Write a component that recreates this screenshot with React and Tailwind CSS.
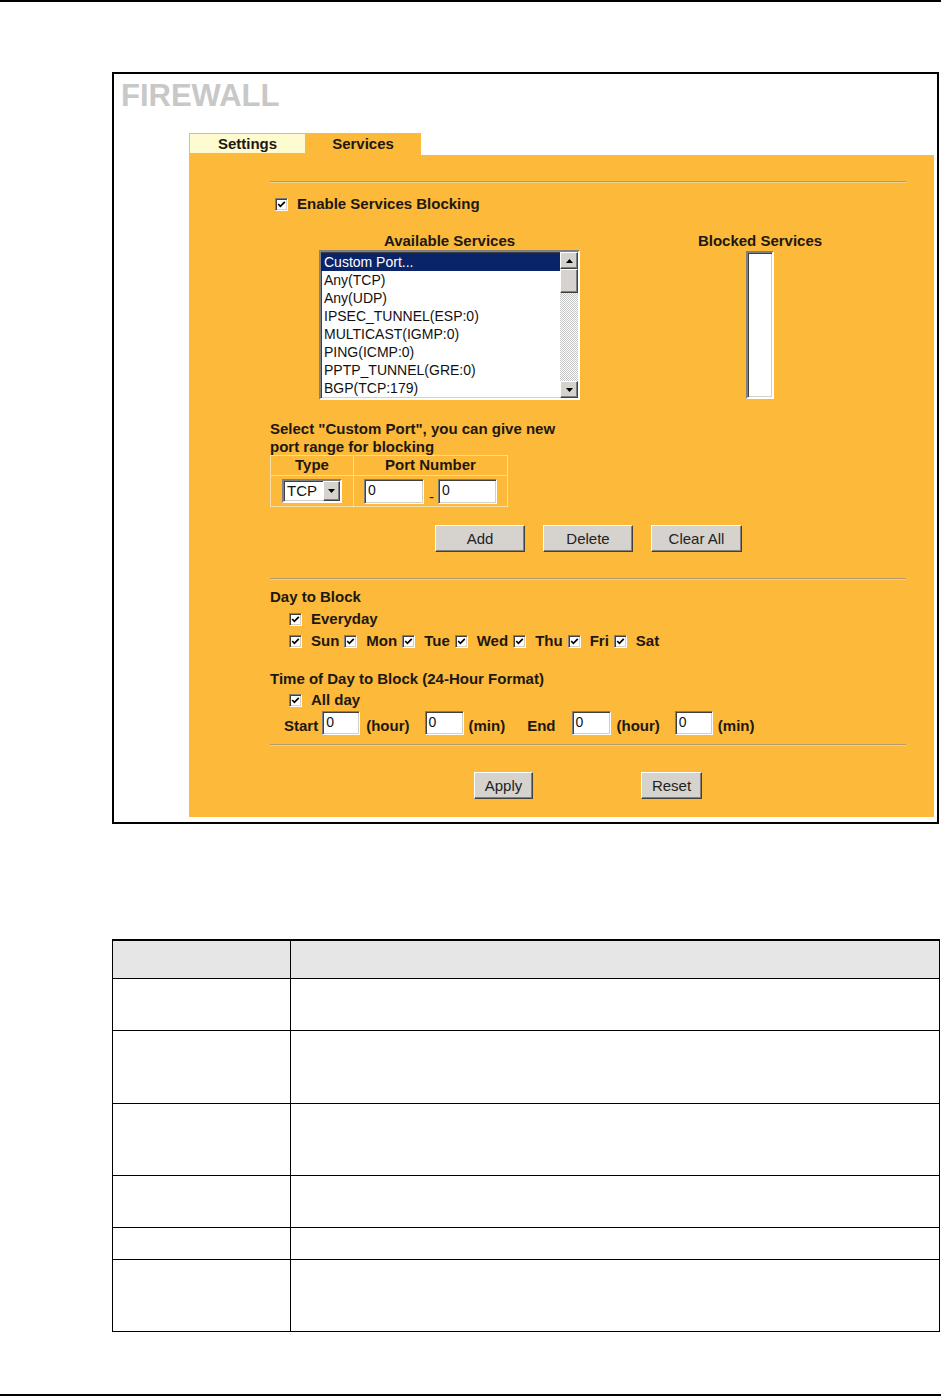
import React from "react"

const insetBox =
  "bg-white border border-t-[#808080] border-l-[#808080] border-r-white border-b-white shadow-[inset_1px_1px_0_#404040,inset_-1px_-1px_0_#d4d0c8]"
const raisedBox =
  "bg-[#d6d3ce] border border-t-white border-l-white border-r-[#404040] border-b-[#404040] shadow-[inset_-1px_-1px_0_#808080]"

const Check = () => (
  <span className={`inline-flex w-[13px] h-[13px] shrink-0 items-center justify-center ${insetBox}`}>
    <svg width="9" height="9" viewBox="0 0 9 9">
      <path d="M1.2 4 L3.4 6.3 L7.8 1.8" fill="none" stroke="#000" strokeWidth="1.7" />
    </svg>
  </span>
)

const Btn = ({ children, className }) => (
  <div
    className={`flex items-center justify-center text-[15px] text-[#222] ${raisedBox} ${className}`}
  >
    {children}
  </div>
)

const Field = ({ className, value = "0" }) => (
  <div className={`${insetBox} ${className} pl-[3px] pt-[2px] text-[14px] leading-[16px] text-[#111]`}>
    {value}
  </div>
)

const Arrow = ({ up }) => (
  <svg width="7" height="4" viewBox="0 0 7 4">
    <path d={up ? "M0 4 L3.5 0 L7 4 Z" : "M0 0 L3.5 4 L7 0 Z"} fill="#000" />
  </svg>
)

const Line = ({ className }) => (
  <div className={`w-[636px] border-t border-t-[#b39a70] border-b border-b-[#ecd08e] ${className}`} />
)

const services = [
  "Custom Port...",
  "Any(TCP)",
  "Any(UDP)",
  "IPSEC_TUNNEL(ESP:0)",
  "MULTICAST(IGMP:0)",
  "PING(ICMP:0)",
  "PPTP_TUNNEL(GRE:0)",
  "BGP(TCP:179)",
]

const days = ["Sun", "Mon", "Tue", "Wed", "Thu", "Fri", "Sat"]

const rowHeights = ["h-[52px]", "h-[73px]", "h-[72px]", "h-[52px]", "h-[32px]", "h-[72px]"]

const Label = ({ children, className = "" }) => (
  <span className={`font-bold text-[15px] leading-[18px] text-[#1c1812] ${className}`}>{children}</span>
)

export default function App() {
  return (
    <div className="w-[941px] h-[1396px] bg-white font-['Liberation_Sans',Arial,sans-serif] leading-[18px] overflow-hidden">
      <div className="h-[2px] bg-black" />

      {/* screenshot frame */}
      <div className="mt-[70px] ml-[112px] w-[827px] h-[752px] border-2 border-black bg-white pt-[6px]">
        <div className="ml-[7px] h-[31px] text-[31px] leading-[31px] font-bold text-[#c8c8c8]">FIREWALL</div>

        <div className="mt-[22px] ml-[75px] w-[232px] h-[22px] bg-[#fdb93a] flex items-start pl-[1px] pt-[1px]">
          <div className="w-[115px] h-[19px] bg-[#fffbd0] text-center leading-[19px]">
            <Label className="leading-[19px]">Settings</Label>
          </div>
          <div className="flex-1 text-center leading-[19px]">
            <Label className="leading-[19px]">Services</Label>
          </div>
        </div>

        <div className="ml-[75px] mr-[3px] h-[662px] bg-[#fdb93a] pl-[81px] pt-[26px]">
          <Line />

          <div className="mt-[12px] h-[18px] flex items-center">
            <span className="ml-[5px] flex">
              <Check />
            </span>
            <Label className="ml-[9px]">Enable Services Blocking</Label>
          </div>

          <div className="mt-[19px] flex items-start">
            <div className="ml-[49px] w-[261px] flex flex-col items-center">
              <Label className="h-[18px]">Available Services</Label>
              <div className={`w-[261px] h-[150px] border-2 ${insetBox} flex`}>
                <div className="flex-1 pt-[1px]">
                  {services.map((s, i) => (
                    <div
                      key={s}
                      className={`h-[18px] pl-[3px] text-[14px] leading-[18px] ${
                        i === 0 ? "bg-[#0a246a] text-white" : "text-[#111]"
                      }`}
                    >
                      {s}
                    </div>
                  ))}
                </div>
                <div className="w-[18px] flex flex-col">
                  <div className={`h-[17px] flex items-center justify-center ${raisedBox}`}>
                    <Arrow up />
                  </div>
                  <div className={`h-[24px] ${raisedBox}`} />
                  <div className="flex-1 bg-[repeating-conic-gradient(#c4c4c4_0_25%,#ffffff_0_50%)] bg-size-[2px_2px]" />
                  <div className={`h-[17px] flex items-center justify-center ${raisedBox}`}>
                    <Arrow />
                  </div>
                </div>
              </div>
            </div>

            <div className="ml-[110px] w-[140px] flex flex-col items-center">
              <Label className="h-[18px]">Blocked Services</Label>
              <div className={`mt-[1px] w-[28px] h-[148px] border-2 ${insetBox}`} />
            </div>
          </div>

          <div className="mt-[20px] h-[35px] font-bold text-[15px] leading-[18px] text-[#1c1812]">
            Select "Custom Port", you can give new
            <br />
            port range for blocking
          </div>

          <div className="w-[238px] h-[52px] border border-[#f3dea6] flex flex-col">
            <div className="h-[20px] flex border-b border-[#f3dea6]">
              <div className="w-[83px] border-r border-[#f3dea6] text-center">
                <Label>Type</Label>
              </div>
              <div className="flex-1 text-center">
                <Label>Port Number</Label>
              </div>
            </div>
            <div className="flex-1 flex">
              <div className="w-[83px] border-r border-[#f3dea6] flex items-center justify-center">
                <div className={`w-[60px] h-[24px] border-2 ${insetBox} flex`}>
                  <div className="flex-1 pl-[3px] text-[15px] leading-[19px] text-[#111]">TCP</div>
                  <div className={`w-[17px] flex items-center justify-center ${raisedBox}`}>
                    <Arrow />
                  </div>
                </div>
              </div>
              <div className="flex-1 flex items-center justify-center">
                <div className="flex items-end">
                  <Field className="w-[60px] h-[25px]" />
                  <span className="ml-[5px] mr-[4px] text-[15px] leading-[15px] text-[#222]">-</span>
                  <Field className="w-[59px] h-[25px]" />
                </div>
              </div>
            </div>
          </div>

          <div className="mt-[18px] flex">
            <Btn className="ml-[165px] w-[90px] h-[27px]">Add</Btn>
            <Btn className="ml-[18px] w-[90px] h-[27px]">Delete</Btn>
            <Btn className="ml-[18px] w-[91px] h-[27px]">Clear All</Btn>
          </div>

          <Line className="mt-[26px]" />

          <div className="mt-[8px] h-[18px]">
            <Label>Day to Block</Label>
          </div>
          <div className="mt-[4px] h-[18px] flex items-center pl-[19px]">
            <Check />
            <Label className="ml-[9px]">Everyday</Label>
          </div>
          <div className="mt-[4px] h-[18px] flex items-center pl-[19px]">
            {days.map((d) => (
              <React.Fragment key={d}>
                <Check />
                <Label className="ml-[9px] mr-[5px]">{d}</Label>
              </React.Fragment>
            ))}
          </div>

          <div className="mt-[20px] h-[18px]">
            <Label>Time of Day to Block (24-Hour Format)</Label>
          </div>
          <div className="mt-[3px] h-[18px] flex items-center pl-[19px]">
            <Check />
            <Label className="ml-[9px]">All day</Label>
          </div>
          <div className="mt-[2px] h-[24px] flex items-end">
            <Label className="ml-[14px]">Start</Label>
            <Field className="ml-[4px] w-[38px] h-[24px]" />
            <Label className="ml-[6px]">(hour)</Label>
            <Field className="ml-[15px] w-[39px] h-[24px]" />
            <Label className="ml-[5px]">(min)</Label>
            <Label className="ml-[22px]">End</Label>
            <Field className="ml-[16px] w-[39px] h-[24px]" />
            <Label className="ml-[6px]">(hour)</Label>
            <Field className="ml-[15px] w-[38px] h-[24px]" />
            <Label className="ml-[5px]">(min)</Label>
          </div>

          <Line className="mt-[9px]" />

          <div className="mt-[26px] flex">
            <Btn className="ml-[204px] w-[59px] h-[27px]">Apply</Btn>
            <Btn className="ml-[108px] w-[61px] h-[27px]">Reset</Btn>
          </div>
        </div>
      </div>

      {/* description table */}
      <div className="mt-[115px] ml-[112px] w-[828px] border-t-2 border-l border-r border-black">
        <div className="h-[38px] flex bg-[#e6e6e6] border-b border-black">
          <div className="w-[178px] border-r border-black" />
          <div className="flex-1" />
        </div>
        {rowHeights.map((h, i) => (
          <div key={i} className={`${h} flex border-b border-black`}>
            <div className="w-[178px] border-r border-black" />
            <div className="flex-1" />
          </div>
        ))}
      </div>

      <div className="mt-[62px] h-[2px] bg-black" />
    </div>
  )
}
